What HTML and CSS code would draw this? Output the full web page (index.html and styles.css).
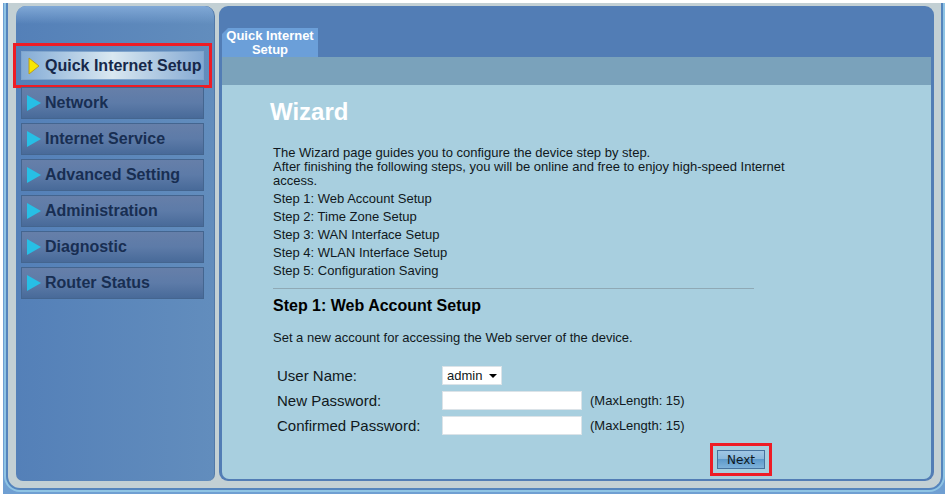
FILE: index.html
```html
<!DOCTYPE html>
<html lang="en">
<head>
  <meta charset="UTF-8" />
  <meta name="viewport" content="width=device-width, initial-scale=1.0"/>
  <title>Wizard</title>
  <link rel="stylesheet" href="styles.css">
</head>
<body>
  <div class="frame">
    <div class="inner">
      <nav class="sidebar">
        <a href="#" class="nav-item active">
          <svg class="arrow" viewBox="0 0 14 18"><path d="M2 1v16l10-8z"/></svg>
          Quick Internet Setup
        </a>
        <a href="#" class="nav-item">
          <svg class="arrow" viewBox="0 0 14 18"><path d="M0 1v16l14-8z"/></svg>
          Network
        </a>
        <a href="#" class="nav-item">
          <svg class="arrow" viewBox="0 0 14 18"><path d="M0 1v16l14-8z"/></svg>
          Internet Service
        </a>
        <a href="#" class="nav-item">
          <svg class="arrow" viewBox="0 0 14 18"><path d="M0 1v16l14-8z"/></svg>
          Advanced Setting
        </a>
        <a href="#" class="nav-item">
          <svg class="arrow" viewBox="0 0 14 18"><path d="M0 1v16l14-8z"/></svg>
          Administration
        </a>
        <a href="#" class="nav-item">
          <svg class="arrow" viewBox="0 0 14 18"><path d="M0 1v16l14-8z"/></svg>
          Diagnostic
        </a>
        <a href="#" class="nav-item">
          <svg class="arrow" viewBox="0 0 14 18"><path d="M0 1v16l14-8z"/></svg>
          Router Status
        </a>
      </nav>

      <main class="panel">
        <header class="tabs">
          <a href="#" class="tab">Quick Internet Setup</a>
        </header>
        <div class="subbar"></div>
        <div class="content">
          <h1>Wizard</h1>
          <div class="intro">
            <p>The Wizard page guides you to configure the device step by step.</p>
            <p>After finishing the following steps, you will be online and free to enjoy high-speed Internet access.</p>
            <ul class="steps">
              <li>Step 1: Web Account Setup</li>
              <li>Step 2: Time Zone Setup</li>
              <li>Step 3: WAN Interface Setup</li>
              <li>Step 4: WLAN Interface Setup</li>
              <li>Step 5: Configuration Saving</li>
            </ul>
          </div>
          <h2>Step 1: Web Account Setup</h2>
          <p class="note">Set a new account for accessing the Web server of the device.</p>
          <form class="account">
            <div class="row">
              <label for="user">User Name:</label>
              <span class="select-wrap">
                <select id="user"><option>admin</option></select>
              </span>
            </div>
            <div class="row">
              <label for="pass">New Password:</label>
              <input type="password" id="pass" maxlength="15">
              <span class="hint">(MaxLength: 15)</span>
            </div>
            <div class="row">
              <label for="confirm">Confirmed Password:</label>
              <input type="password" id="confirm" maxlength="15">
              <span class="hint">(MaxLength: 15)</span>
            </div>
            <button type="button" class="next">Next</button>
          </form>
        </div>
      </main>
    </div>
  </div>
</body>
</html>
```

FILE: styles.css
```css
* {
  margin: 0;
  padding: 0;
  box-sizing: border-box;
}

body {
  font-family: "Liberation Sans", Arial, sans-serif;
  font-size: 13px;
  color: #101820;
  background: #fff;
  min-height: 100vh;
  display: flex;
  padding: 3px 4px 1px 3px;
}

.frame {
  flex: 1;
  display: flex;
  background: #6f9fd2;
  padding: 0 2px 4px 3px;
}

.inner {
  flex: 1;
  display: flex;
  gap: 4px;
  background: #c3d0d4;
  border: 2px solid #5585bd;
  border-top: none;
  border-radius: 0 0 14px 14px;
  box-shadow: 0 0 0 2px #8fc4e4;
  clip-path: inset(0 -2px -2px -2px);
  padding: 3px 7px 7px 8px;
}

.sidebar {
  width: 199px;
  flex: none;
  display: flex;
  flex-direction: column;
  gap: 4px;
  padding: 45px 10px 0 5px;
  background: linear-gradient(to bottom, #80a8d6, rgba(83, 127, 183, 0) 18px),
    linear-gradient(to right, #5480b8, #628dbd);
  border-radius: 10px 10px 7px 7px;
  border-right: 1px solid #5279a8;
}

.nav-item {
  display: flex;
  align-items: center;
  gap: 4px;
  height: 32px;
  padding-left: 5px;
  color: #182e52;
  font-size: 16px;
  font-weight: bold;
  text-decoration: none;
  white-space: nowrap;
  background: linear-gradient(#667fa9, #5d7ba8 50%, #486a99);
  border: 1px solid #44658f;
}

.nav-item.active {
  height: 29px;
  margin-bottom: 3px;
  color: #16284a;
  background: linear-gradient(to right, #84acd6, #d9e8f1 50%, #84a9d3);
  border-color: #7fa5cd;
  outline: 3px solid #ee1c25;
  outline-offset: 5px;
}

.arrow {
  width: 14px;
  height: 18px;
  fill: #27bfe5;
}

.active .arrow {
  fill: #f7e600;
  stroke: #b99c22;
}

.panel {
  flex: 1;
  display: flex;
  flex-direction: column;
  background: #527db5;
  border-radius: 9px;
  padding: 0 3px 2px;
}

.tabs {
  height: 51px;
  display: flex;
  align-items: flex-end;
}

.tab {
  width: 96px;
  height: 29px;
  padding-top: 1px;
  color: #fff;
  font-weight: bold;
  line-height: 14px;
  text-align: center;
  text-decoration: none;
  background: #6b9fd9;
  clip-path: polygon(6px 0, 100% 0, 100% 100%, 0 100%, 0 6px);
}

.subbar {
  height: 28px;
  background: #7aa2bb;
}

.content {
  flex: 1;
  padding: 13px 48px 0 51px;
  background: #a8cfdf;
  border-radius: 0 0 7px 7px;
}

h1 {
  margin-left: -3px;
  font-size: 24px;
  line-height: 28px;
  color: #fff;
}

.intro {
  max-width: 481px;
  padding-bottom: 8px;
  margin-top: 20px;
  line-height: 14px;
  border-bottom: 1px solid #8fa9b5;
}

.intro p {
  margin-right: -50px;
}

.steps {
  list-style: none;
  margin-top: 2px;
  line-height: 18px;
}

h2 {
  margin-top: 7px;
  font-size: 16px;
  line-height: 20px;
  color: #000;
}

.note {
  margin-top: 14px;
  line-height: 16px;
}

.account {
  display: flex;
  flex-direction: column;
  gap: 5px;
  margin: 19px 118px 0 4px;
}

.row {
  display: flex;
  align-items: center;
  height: 20px;
}

.row label {
  width: 165px;
  font-size: 15px;
}

.row input {
  width: 140px;
  height: 19px;
  padding: 0 4px;
  background: #fff;
  border: 1px solid #dbe3e8;
}

.hint {
  margin-left: 8px;
}

.select-wrap {
  position: relative;
}

.select-wrap select {
  display: block;
  appearance: none;
  width: 60px;
  height: 19px;
  padding-left: 4px;
  font: inherit;
  color: inherit;
  background: #fff;
  border: 1px solid #dbe3e8;
  border-radius: 0;
}

.select-wrap::after {
  content: "";
  position: absolute;
  right: 5px;
  top: 8px;
  border: 4px solid transparent;
  border-top-color: #000;
  border-bottom: none;
  pointer-events: none;
}

.next {
  align-self: flex-end;
  width: 48px;
  height: 19px;
  margin: 10px 0 8px;
  font-family: "DejaVu Sans", Verdana, sans-serif;
  font-size: 12px;
  line-height: 16px;
  color: #101820;
  background: linear-gradient(#9fc6e4, #8ab8dc 50%, #5e9acb 50%, #7eb2da);
  border: 1px solid #46729d;
  outline: 3px solid #ee1c25;
  outline-offset: 4px;
}
```
